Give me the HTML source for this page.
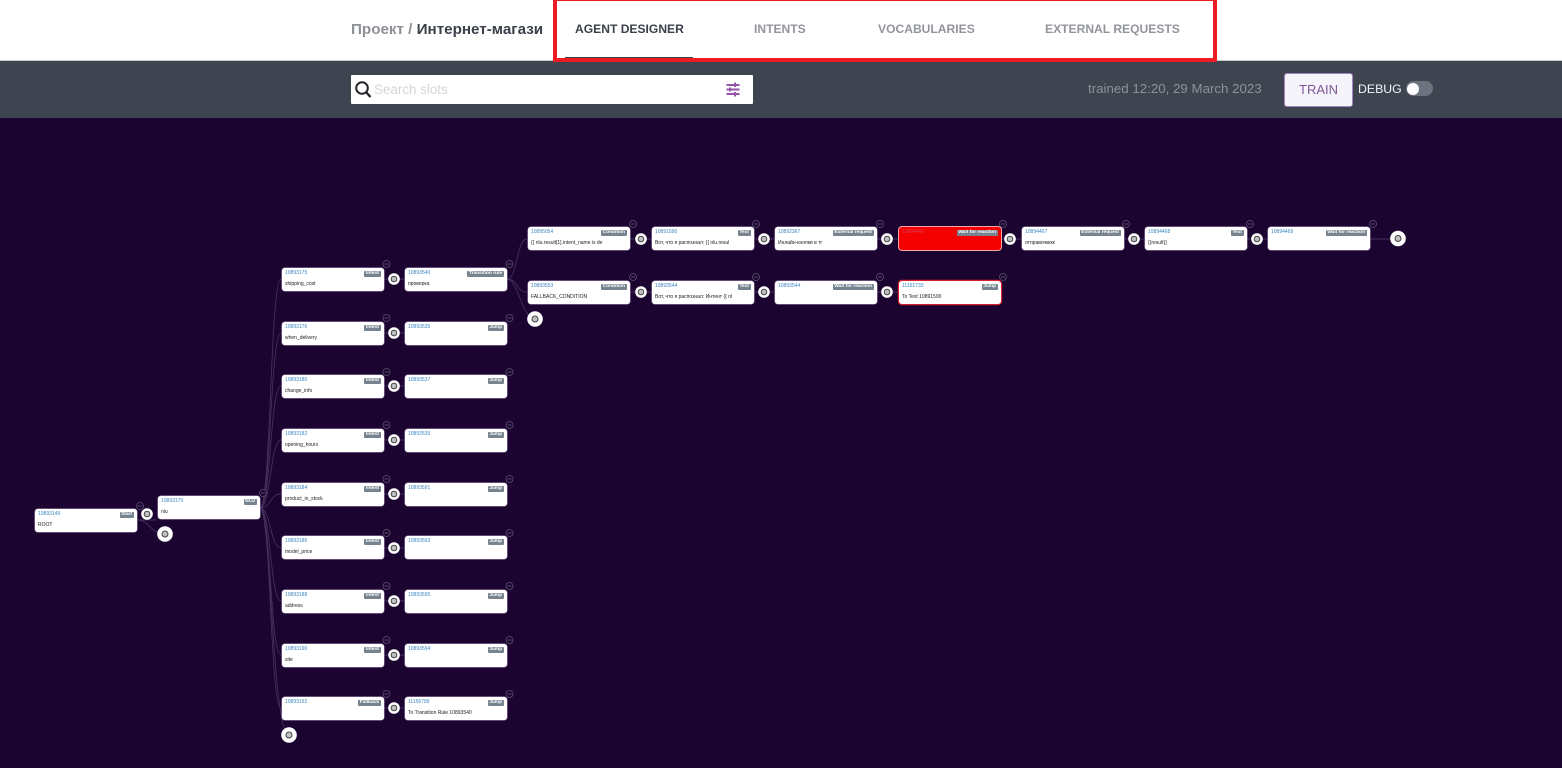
<!DOCTYPE html>
<html lang="ru"><head><meta charset="utf-8"><title>Agent Designer</title>
<style>
html,body{margin:0;padding:0;width:1562px;height:768px;overflow:hidden;background:#fff;font-family:"Liberation Sans","Noto Sans CJK SC",sans-serif}
.abs{position:absolute}
#top{position:absolute;left:0;top:0;width:1562px;height:60px;background:#fff}
#bar{position:absolute;left:0;top:60px;width:1562px;height:58px;background:#3f4550;border-top:1px solid #c6c8cc;box-sizing:border-box}
#canvas{position:absolute;left:0;top:118px;width:1562px;height:650px;background:#1c0430}
.crumb{position:absolute;left:351px;top:21px;font-size:15.2px;line-height:17px;color:#8d9097;font-weight:bold;white-space:nowrap}
.crumb b{color:#3a3f49}
.tab{position:absolute;top:21px;font-size:12.1px;line-height:16px;font-weight:bold;color:#92959b;white-space:nowrap}
#redbox{position:absolute;left:553px;top:-3px;width:656px;height:57px;border:4px solid #ed1c24}
.n{position:absolute;width:102px;height:22.4px;margin:.3px 0 0 .5px;background:#fff;border-radius:3px;box-shadow:0 0 0 .5px #a893bd;overflow:hidden}
.n i{position:absolute;left:3.500px;top:2.200px;font:normal 5px/6px "Liberation Sans",sans-serif;color:#3a86c0;white-space:nowrap}
.n b{position:absolute;right:3px;top:2.700px;padding:0 1.5px;background:#77848f;color:#fff;font:bold 4.8px/6px "Liberation Sans",sans-serif;border-radius:1px;white-space:nowrap}
.n span{position:absolute;left:3.500px;top:12.700px;font:normal 5px/6px "Liberation Sans","Noto Sans CJK SC",sans-serif;color:#222;white-space:nowrap}
.n.red{background:#f50000;box-shadow:0 0 0 1px #f4a6b0}
.n.red i{color:#d4405e}
.n.rb{box-shadow:0 0 0 1.2px #d81f2e}
#nodes{position:absolute;left:0;top:0;width:1562px;height:768px;filter:blur(.25px)}
</style></head><body>
<div id="top"></div>
<div class="crumb">Проект / <b>Интернет-магази</b></div>
<div class="tab" style="left:575px;color:#3b404a">AGENT DESIGNER</div>
<div class="tab" style="left:754px">INTENTS</div>
<div class="tab" style="left:878px">VOCABULARIES</div>
<div class="tab" style="left:1045px">EXTERNAL REQUESTS</div>
<div class="abs" style="left:565px;top:57px;width:128px;height:2px;background:#3b404a"></div>
<div id="bar"></div>
<div class="abs" style="left:351px;top:75px;width:402px;height:29px;background:#fff;border-radius:1px"></div>
<svg class="abs" style="left:353px;top:79px" width="20" height="20" viewBox="0 0 20 20"><circle cx="9" cy="9" r="5.800" fill="none" stroke="#22252b" stroke-width="2"/><path d="M13 13L17.500 18" stroke="#22252b" stroke-width="2.400"/></svg>
<div class="abs" style="left:374px;top:82px;font-size:13.400px;line-height:15px;color:#d3d5d9">Search slots</div>
<svg class="abs" style="left:725px;top:81px" width="16" height="17" viewBox="0 0 16 17"><path d="M1.500 4H14.500M1.500 8.500H14.500M1.500 13H14.500M10 1.500V6M5 6.500V10.500M10 11V15.500" stroke="#9353a8" stroke-width="1.900" fill="none"/></svg>
<div class="abs" style="left:1088px;top:81px;font-size:13.300px;line-height:15px;color:#8d929a;white-space:nowrap">trained 12:20, 29 March 2023</div>
<div class="abs" style="left:1284px;top:73px;width:67px;height:32px;background:#f5f4fa;border:.6px solid #a585bd;border-radius:3px;text-align:center;font-size:13px;line-height:31px;color:#7d5a98">TRAIN</div>
<div class="abs" style="left:1358px;top:81.500px;font-size:12.300px;line-height:15px;color:#f2f3f5">DEBUG</div>
<div class="abs" style="left:1406px;top:81px;width:27px;height:15px;border-radius:8px;background:#6c737e"></div>
<div class="abs" style="left:1407px;top:82.500px;width:12px;height:12px;border-radius:50%;background:#fff"></div>
<div id="redbox"></div>
<div id="canvas"></div>

<div id="nodes">
<svg class="abs" style="left:0;top:0" width="1562" height="768" viewBox="0 0 1562 768">
<g fill="none" stroke="#43305c" stroke-width=".9">
<path d="M137 520H157M137 520C150 520 150 534 165 534"/>
<path d="M260 508C271 508 270 279 281 279"/>
<path d="M260 508C271 508 270 333 281 333"/>
<path d="M260 508C271 508 270 386 281 386"/>
<path d="M260 508C271 508 270 440 281 440"/>
<path d="M260 508C271 508 270 494 281 494"/>
<path d="M260 508C271 508 270 548 281 548"/>
<path d="M260 508C271 508 270 601 281 601"/>
<path d="M260 508C271 508 270 655 281 655"/>
<path d="M260 508C271 508 270 708 281 708"/>
<path d="M260 508C271 508 272 735 289 735"/>
<path d="M507 279C518 279 516 239 527 239"/>
<path d="M507 279C518 279 516 292 527 292"/>
<path d="M507 279C518 279 522 319 535 319"/>
<path d="M1370 239H1398"/>
<path d="M384 279H404M384 333H404M384 386H404M384 440H404M384 494H404M384 548H404M384 601H404M384 655H404M384 708H404"/>
<path d="M630 239H651M754 239H774M877 239H898M1001 239H1021M1124 239H1144M1247 239H1267M630 292H651M754 292H774M877 292H898"/>
</g>
<g fill="#1c0430" stroke="#5f5472" stroke-width=".8">
<circle cx="140" cy="506" r="3.500"/><circle cx="263" cy="493" r="3.500"/>
<circle cx="386.500" cy="264" r="3.500"/><circle cx="386.500" cy="318" r="3.500"/><circle cx="386.500" cy="372" r="3.500"/><circle cx="386.500" cy="425" r="3.500"/><circle cx="386.500" cy="479" r="3.500"/><circle cx="386.500" cy="533" r="3.500"/><circle cx="386.500" cy="586" r="3.500"/><circle cx="386.500" cy="640" r="3.500"/><circle cx="386.500" cy="694" r="3.500"/>
<circle cx="509.500" cy="264" r="3.500"/><circle cx="509.500" cy="318" r="3.500"/><circle cx="509.500" cy="372" r="3.500"/><circle cx="509.500" cy="425" r="3.500"/><circle cx="509.500" cy="479" r="3.500"/><circle cx="509.500" cy="533" r="3.500"/><circle cx="509.500" cy="586" r="3.500"/><circle cx="509.500" cy="640" r="3.500"/><circle cx="509.500" cy="694" r="3.500"/>
<circle cx="633" cy="224" r="3.500"/><circle cx="756" cy="224" r="3.500"/><circle cx="880" cy="224" r="3.500"/><circle cx="1003" cy="224" r="3.500"/><circle cx="1126" cy="224" r="3.500"/><circle cx="1250" cy="224" r="3.500"/><circle cx="1373" cy="224" r="3.500"/>
<circle cx="633" cy="277" r="3.500"/><circle cx="756" cy="277" r="3.500"/><circle cx="880" cy="277" r="3.500"/><circle cx="1003" cy="277" r="3.500"/>
</g>
<path fill="none" stroke="#6f6480" stroke-width=".8" d="M138 506h4M261 493h4M384.500 264h4M384.500 318h4M384.500 372h4M384.500 425h4M384.500 479h4M384.500 533h4M384.500 586h4M384.500 640h4M384.500 694h4M507.500 264h4M507.500 318h4M507.500 372h4M507.500 425h4M507.500 479h4M507.500 533h4M507.500 586h4M507.500 640h4M507.500 694h4M631 224h4M754 224h4M878 224h4M1001 224h4M1124 224h4M1248 224h4M1371 224h4M631 277h4M754 277h4M878 277h4M1001 277h4"/>
<g fill="#fff">
<circle cx="147" cy="514" r="5.800"/><circle cx="394" cy="279" r="5.800"/><circle cx="394" cy="333" r="5.800"/><circle cx="394" cy="386" r="5.800"/><circle cx="394" cy="440" r="5.800"/><circle cx="394" cy="494" r="5.800"/><circle cx="394" cy="548" r="5.800"/><circle cx="394" cy="601" r="5.800"/><circle cx="394" cy="655" r="5.800"/><circle cx="394" cy="708" r="5.800"/>
<circle cx="641" cy="239" r="5.800"/><circle cx="764" cy="239" r="5.800"/><circle cx="887" cy="239" r="5.800"/><circle cx="1010" cy="239" r="5.800"/><circle cx="1134" cy="239" r="5.800"/><circle cx="1257" cy="239" r="5.800"/>
<circle cx="641" cy="292" r="5.800"/><circle cx="764" cy="292" r="5.800"/><circle cx="887" cy="292" r="5.800"/>
<circle cx="165" cy="534" r="7.800"/><circle cx="289" cy="735" r="7.800"/><circle cx="535" cy="319" r="7.800"/><circle cx="1398" cy="238.500" r="7.800"/>
</g>
<g fill="#c0c0c0" stroke="#444" stroke-width="1">
<circle cx="147" cy="514" r="2.800"/><circle cx="394" cy="279" r="2.800"/><circle cx="394" cy="333" r="2.800"/><circle cx="394" cy="386" r="2.800"/><circle cx="394" cy="440" r="2.800"/><circle cx="394" cy="494" r="2.800"/><circle cx="394" cy="548" r="2.800"/><circle cx="394" cy="601" r="2.800"/><circle cx="394" cy="655" r="2.800"/><circle cx="394" cy="708" r="2.800"/>
<circle cx="641" cy="239" r="2.800"/><circle cx="764" cy="239" r="2.800"/><circle cx="887" cy="239" r="2.800"/><circle cx="1010" cy="239" r="2.800"/><circle cx="1134" cy="239" r="2.800"/><circle cx="1257" cy="239" r="2.800"/>
<circle cx="641" cy="292" r="2.800"/><circle cx="764" cy="292" r="2.800"/><circle cx="887" cy="292" r="2.800"/>
<circle cx="165" cy="534" r="3"/><circle cx="289" cy="735" r="3"/><circle cx="535" cy="319" r="3"/><circle cx="1398" cy="238.500" r="3"/>
</g>
</svg>

<div class="n" style="left:34px;top:509px"><i>10893149</i><b>Start</b><span>ROOT</span></div>
<div class="n" style="left:157px;top:496px"><i>10893170</i><b>NLU</b><span>nlu</span></div>

<div class="n" style="left:281px;top:268px"><i>10893175</i><b>Intent</b><span>shipping_cost</span></div>
<div class="n" style="left:281px;top:322px"><i>10893176</i><b>Intent</b><span>when_delivery</span></div>
<div class="n" style="left:281px;top:375px"><i>10893180</i><b>Intent</b><span>change_info</span></div>
<div class="n" style="left:281px;top:429px"><i>10893182</i><b>Intent</b><span>opening_hours</span></div>
<div class="n" style="left:281px;top:483px"><i>10893184</i><b>Intent</b><span>product_in_stock</span></div>
<div class="n" style="left:281px;top:536px"><i>10893186</i><b>Intent</b><span>model_price</span></div>
<div class="n" style="left:281px;top:590px"><i>10893188</i><b>Intent</b><span>address</span></div>
<div class="n" style="left:281px;top:644px"><i>10893190</i><b>Intent</b><span>site</span></div>
<div class="n" style="left:281px;top:697px"><i>10893192</i><b>Fallback</b></div>

<div class="n" style="left:404px;top:268px"><i>10893540</i><b>Transition rule</b><span>проверка</span></div>
<div class="n" style="left:404px;top:322px"><i>10893535</i><b>Jump</b></div>
<div class="n" style="left:404px;top:375px"><i>10893537</i><b>Jump</b></div>
<div class="n" style="left:404px;top:429px"><i>10893539</i><b>Jump</b></div>
<div class="n" style="left:404px;top:483px"><i>10893591</i><b>Jump</b></div>
<div class="n" style="left:404px;top:536px"><i>10893593</i><b>Jump</b></div>
<div class="n" style="left:404px;top:590px"><i>10893595</i><b>Jump</b></div>
<div class="n" style="left:404px;top:644px"><i>10893594</i><b>Jump</b></div>
<div class="n" style="left:404px;top:697px"><i>11156789</i><b>Jump</b><span>To Transition Rule 10893540</span></div>

<div class="n" style="left:527px;top:227px"><i>10895054</i><b>Condition</b><span>{{ nlu.result[1].intent_name is de</span></div>
<div class="n" style="left:651px;top:227px"><i>10891590</i><b>Text</b><span>Вот, что я распознал: {{ nlu.resul</span></div>
<div class="n" style="left:774px;top:227px"><i>10892367</i><b>External request</b><span>Инлайн-кнопки в тг</span></div>
<div class="n red" style="left:898px;top:227px"><i>10894441</i><b>Wait for reaction</b></div>
<div class="n" style="left:1021px;top:227px"><i>10894467</i><b>External request</b><span>отправочкккк</span></div>
<div class="n" style="left:1144px;top:227px"><i>10894468</i><b>Text</b><span>{{result}}</span></div>
<div class="n" style="left:1267px;top:227px"><i>10894469</i><b>Wait for reaction</b></div>

<div class="n" style="left:527px;top:281px"><i>10893553</i><b>Condition</b><span>FALLBACK_CONDITION</span></div>
<div class="n" style="left:651px;top:281px"><i>10893544</i><b>Text</b><span>Вот, что я распознал: Интент {{ nl</span></div>
<div class="n" style="left:774px;top:281px"><i>10893544</i><b>Wait for reaction</b></div>
<div class="n rb" style="left:898px;top:281px"><i>11161733</i><b>Jump</b><span>To Text 10891590</span></div>
</div>
</body></html>
